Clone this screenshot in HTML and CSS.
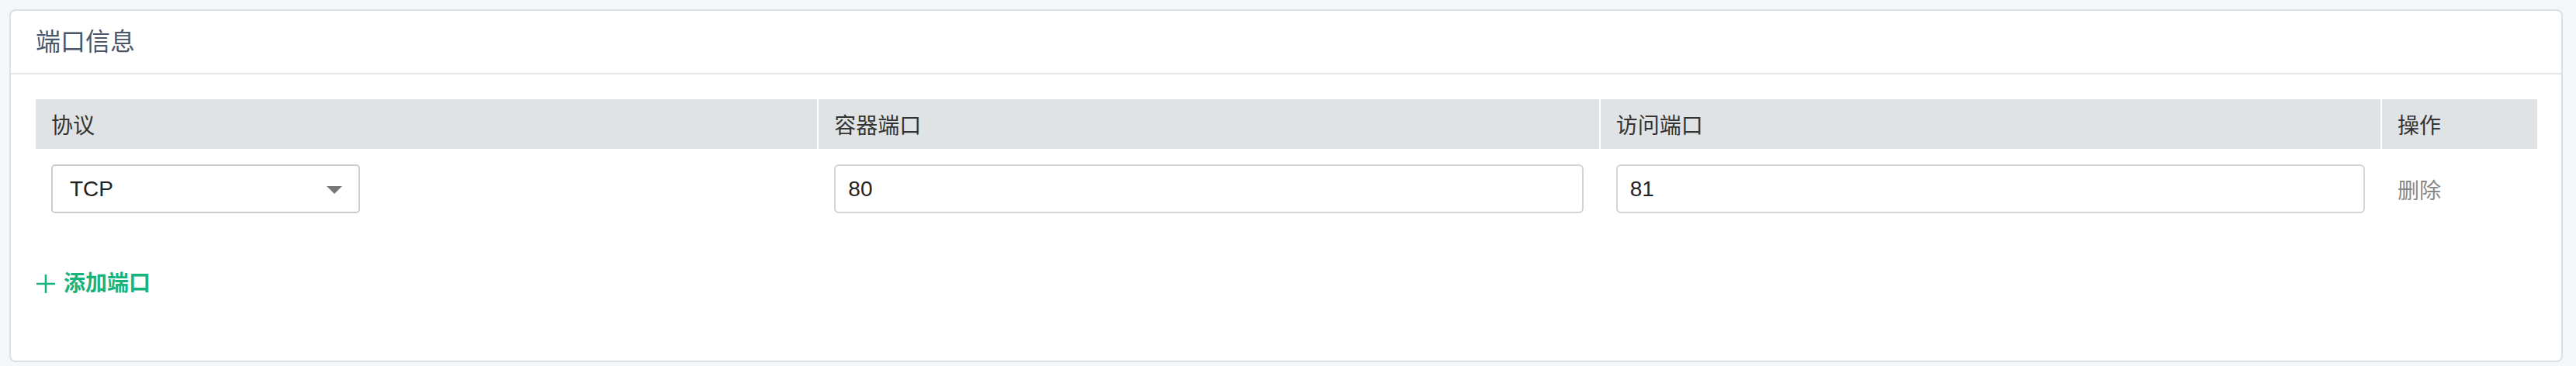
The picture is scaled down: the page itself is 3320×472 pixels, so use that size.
FILE: index.html
```html
<!DOCTYPE html>
<html lang="zh-CN">
<head>
<meta charset="utf-8">
<title>端口信息</title>
<link rel="stylesheet" href="styles.css">
</head>
<body>
<section class="card">
  <header class="card-header">
    <h2 class="card-title">端口信息</h2>
  </header>
  <div class="card-body">
    <div class="port-table">
      <div class="th">协议</div>
      <div class="th sep">容器端口</div>
      <div class="th sep">访问端口</div>
      <div class="th sep">操作</div>

      <div class="td">
        <div class="select">
          <span class="select-value">TCP</span>
          <span class="select-arrow"></span>
        </div>
      </div>
      <div class="td sep">
        <input class="text-input" type="text" value="80">
      </div>
      <div class="td sep">
        <input class="text-input" type="text" value="81">
      </div>
      <div class="td sep">
        <span class="delete">删除</span>
      </div>
    </div>

    <a class="add-port">
      <svg class="plus" width="24" height="24" viewBox="0 0 24 24" aria-hidden="true">
        <path d="M12 0 V24 M0 12 H24" stroke="currentColor" stroke-width="2.6" fill="none"/>
      </svg>
      <span>添加端口</span>
    </a>
  </div>
</section>
</body>
</html>
```

FILE: styles.css
```css
* { box-sizing: border-box; }

html, body {
  margin: 0;
  padding: 0;
  background: #f4f7fa;
  font-family: "Liberation Sans", "Noto Sans CJK SC", sans-serif;
}

body {
  padding: 12px 17px 0 12px;
}

.card {
  height: 455px;
  background: #ffffff;
  border: 2px solid #dcdfe3;
  border-radius: 8px;
  display: flex;
  flex-direction: column;
}

.card-header {
  height: 82px;
  border-bottom: 2px solid #e1e4e8;
  display: flex;
  align-items: center;
  padding-left: 32px;
}

.card-title {
  margin: 0;
  font-size: 32px;
  font-weight: normal;
  color: #4b5568;
  line-height: 1;
}

.card-body {
  padding: 32px 31px 0 32px;
}

.port-table {
  display: grid;
  grid-template-columns: 1fr 1fr 1fr 202px;
}

.th {
  height: 64px;
  background: #e0e3e5;
  display: flex;
  align-items: center;
  padding-left: 20px;
  font-size: 28px;
  color: #333333;
}

.sep {
  border-left: 2px solid #ffffff;
}

.td {
  padding: 20px;
  display: flex;
  align-items: center;
}

.select {
  width: 398px;
  height: 63px;
  border: 2px solid #cccccc;
  border-radius: 5px;
  display: flex;
  align-items: center;
  justify-content: space-between;
  padding: 0 21px 0 22px;
  font-size: 28px;
  color: #222222;
}

.select-arrow {
  width: 0;
  height: 0;
  border-left: 10px solid transparent;
  border-right: 10px solid transparent;
  border-top: 10px solid #777777;
  margin-top: 2px;
}

.text-input {
  width: 100%;
  height: 63px;
  border: 2px solid #d0d5da;
  border-radius: 6px;
  padding: 0 16px;
  font-family: "Liberation Sans", "Noto Sans CJK SC", sans-serif;
  font-size: 28px;
  color: #222222;
  background: #ffffff;
  outline: none;
}

.delete {
  font-size: 28px;
  color: #888888;
}

.add-port {
  margin-top: 53px;
  display: inline-flex;
  align-items: center;
  gap: 11px;
  color: #16b47c;
  font-size: 28px;
  font-weight: bold;
  line-height: 36px;
  padding-left: 1px;
}

.plus {
  display: block;
  width: 24px;
  height: 24px;
}
```
